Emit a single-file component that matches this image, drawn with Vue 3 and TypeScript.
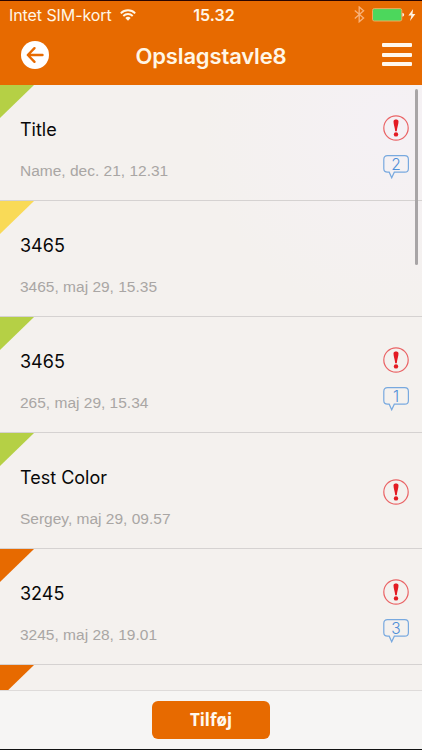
<script setup lang="ts">
interface Post {
  title: string
  meta: string
  color: string
  alert: boolean
  comments?: number
}

const posts: Post[] = [
  { title: 'Title', meta: 'Name, dec. 21, 12.31', color: 'green', alert: true, comments: 2 },
  { title: '3465', meta: '3465, maj 29, 15.35', color: 'yellow', alert: false },
  { title: '3465', meta: '265, maj 29, 15.34', color: 'green', alert: true, comments: 1 },
  { title: 'Test Color', meta: 'Sergey, maj 29, 09.57', color: 'green', alert: true },
  { title: '3245', meta: '3245, maj 28, 19.01', color: 'orange', alert: true, comments: 3 },
  { title: '', meta: '', color: 'orange', alert: false },
]
</script>

<template>
  <div class="screen">
    <header class="top">
      <div class="status">
        <div class="carrier">
          <span class="carrier-name">Intet SIM-kort</span>
          <svg class="wifi" width="16" height="12" viewBox="0 0 16 12" fill="none" stroke="#fff6e6" stroke-width="1.9">
            <path d="M0.8 4.3a10.2 10.2 0 0 1 14.4 0" />
            <path d="M3.3 7a6.7 6.7 0 0 1 9.4 0" />
            <path d="M5.3 9a3.9 3.9 0 0 1 5.4 0L8 11.8Z" fill="#fff6e6" stroke="none" />
          </svg>
        </div>
        <span class="clock">15.32</span>
        <div class="power">
          <svg width="11" height="17" viewBox="0 0 11 17" fill="none" stroke="#f8b27a" stroke-width="1.3">
            <path d="M0.8 4.4 9.6 12 5.2 15.8V1L9.6 4.8 0.8 12.4" />
          </svg>
          <svg class="battery" width="34" height="14" viewBox="0 0 34 14">
            <rect x="0.5" y="0.6" width="29.3" height="12.4" rx="1.8" fill="#4cd75c" stroke="#efa95e" />
            <path d="M30.4 4.8q1.8.5 1.8 2t-1.8 2Z" fill="#fff3e2" />
          </svg>
          <svg class="bolt" width="8" height="12" viewBox="0 0 8 12">
            <path d="M5.1 0 .4 6.5h3L2 12l5.4-7H4.5Z" fill="#fff3e2" />
          </svg>
        </div>
      </div>
      <nav class="nav">
        <button class="back" aria-label="Tilbage">
          <svg width="28" height="28" viewBox="0 0 28 28">
            <circle cx="14" cy="14" r="14" fill="#fff" />
            <path d="M21.5 14H7M13.5 7.2 6.8 14l6.7 6.8" fill="none" stroke="#e76a00" stroke-width="2.4" stroke-linecap="round" stroke-linejoin="round" />
          </svg>
        </button>
        <h1>Opslagstavle8</h1>
        <button class="menu" aria-label="Menu"><i></i><i></i><i></i></button>
      </nav>
    </header>

    <main class="list">
      <article v-for="(post, i) in posts" :key="i" class="row">
        <span class="corner" :class="post.color"></span>
        <div class="texts">
          <h2>{{ post.title }}</h2>
          <p>{{ post.meta }}</p>
        </div>
        <div class="marks" :class="{ paired: post.comments }">
          <svg v-if="post.alert" width="26" height="26" viewBox="0 0 26 26">
            <circle cx="13" cy="13" r="12.2" fill="none" stroke="#ea6466" stroke-width="1.2" />
            <path d="M10.5 6.4C10.5 3.8 15.5 3.8 15.5 6.4C15.5 9.1 14.1 12.4 13.8 16.3H12.2C11.9 12.4 10.5 9.1 10.5 6.4Z" fill="#e31b23" />
            <circle cx="13" cy="19.4" r="2.2" fill="#e31b23" />
          </svg>
          <div v-if="post.comments" class="bubble">
            <svg width="26" height="24" viewBox="0 0 26 24" fill="none" stroke="#78a9df" stroke-width="1.2">
              <path d="M4.5.7H21.7Q25.4.7 25.4 4.4V13.4Q25.4 17.2 21.7 17.2H11.3L8.7 22.8 6.2 17.2H4.5Q.8 17.2.8 13.4V4.4Q.8.7 4.5.7Z" />
            </svg>
            <span>{{ post.comments }}</span>
          </div>
        </div>
      </article>
      <div class="scrollbar"></div>
    </main>

    <footer class="bottom"><button class="add">Tilføj</button></footer>
  </div>
</template>

<style>
body {
  margin: 0;
}
</style>

<style scoped>
.screen {
  box-sizing: border-box;
  width: 422px;
  height: 750px;
  display: flex;
  flex-direction: column;
  overflow: hidden;
  border-top: 1px solid #2b0500;
  border-bottom: 1px solid #111;
  background: #f4f1ee;
  font-family: Inter, "Liberation Sans", sans-serif;
}
button {
  border: 0;
  padding: 0;
  background: none;
}
.top {
  flex: none;
  height: 84px;
  background: #e76a00;
  color: #fff6e6;
}
.status {
  height: 27px;
  display: grid;
  grid-template-columns: 1fr auto 1fr;
  align-items: center;
  padding: 0 6px 0 9px;
}
.carrier {
  display: flex;
  align-items: center;
  gap: 8px;
}
.carrier-name {
  font-size: 16px;
  letter-spacing: -0.08px;
}
.clock {
  padding-left: 3px;
  font-size: 16px;
  font-weight: 600;
}
.power {
  display: flex;
  align-items: center;
  justify-content: flex-end;
}
.battery {
  margin-left: 7px;
}
.bolt {
  margin-left: 2px;
}
.nav {
  height: 57px;
  display: grid;
  grid-template-columns: 60px 1fr 60px;
  align-items: center;
  box-sizing: border-box;
  padding-bottom: 4px;
}
.back {
  height: 28px;
  margin-left: 21px;
  width: 28px;
}
.back svg {
  display: block;
}
h1 {
  margin: 0;
  padding-top: 2px;
  text-align: center;
  font-size: 22px;
  line-height: 28px;
  font-weight: 600;
  letter-spacing: -0.15px;
}
.menu {
  width: 30px;
  margin-left: 20px;
  display: flex;
  flex-direction: column;
  gap: 5.5px;
}
.menu i {
  height: 4px;
  border-radius: 1px;
  background: #fff8ee;
}
.list {
  position: relative;
  flex: 1;
  min-height: 0;
  overflow: hidden;
  background: radial-gradient(circle at 390px 40px, #f5f1f5, #f4f1ee 190px);
}
.row {
  position: relative;
  box-sizing: border-box;
  height: 116px;
  display: flex;
  justify-content: space-between;
  padding: 0 13px 0 20px;
  border-bottom: 1px solid #d5d2d1;
}
.corner {
  position: absolute;
  left: 0;
  top: 0;
  width: 34px;
  height: 33px;
  clip-path: polygon(0 0, 100% 0, 0 100%);
}
.green {
  background: #b5d045;
}
.yellow {
  background: #f9da57;
}
.orange {
  background: #e76a00;
}
.texts {
  padding-top: 33px;
}
h2 {
  margin: 0;
  height: 24px;
  font-size: 18px;
  line-height: 24px;
  font-weight: 400;
  color: #080808;
}
p {
  margin: 19px 0 0;
  font-family: "Liberation Sans", Arial, sans-serif;
  font-size: 15.5px;
  line-height: 20px;
  color: #a9a6a4;
}
.marks {
  display: flex;
  flex-direction: column;
  justify-content: center;
  gap: 14px;
  padding-top: 3px;
}
.marks.paired {
  padding-top: 9px;
}
.marks svg {
  display: block;
}
.bubble {
  position: relative;
  height: 24px;
}
.bubble span {
  position: absolute;
  inset: 0 0 auto;
  text-align: center;
  font-size: 15.5px;
  font-weight: 300;
  line-height: 19px;
  color: #4f8fd8;
}
.scrollbar {
  position: absolute;
  right: 4px;
  top: 4px;
  width: 3px;
  height: 176px;
  border-radius: 2px;
  background: #a8a5a6;
}
.bottom {
  box-sizing: border-box;
  flex: none;
  height: 59px;
  display: flex;
  justify-content: center;
  padding-top: 10px;
  border-top: 1px solid #dedbda;
  background: #f6f5f4;
}
.add {
  width: 118px;
  height: 38px;
  border-radius: 6px;
  background: #e76a00;
  color: #fff8ee;
  font: 700 17px/38px "Noto Sans", "Open Sans", sans-serif;
}
</style>
